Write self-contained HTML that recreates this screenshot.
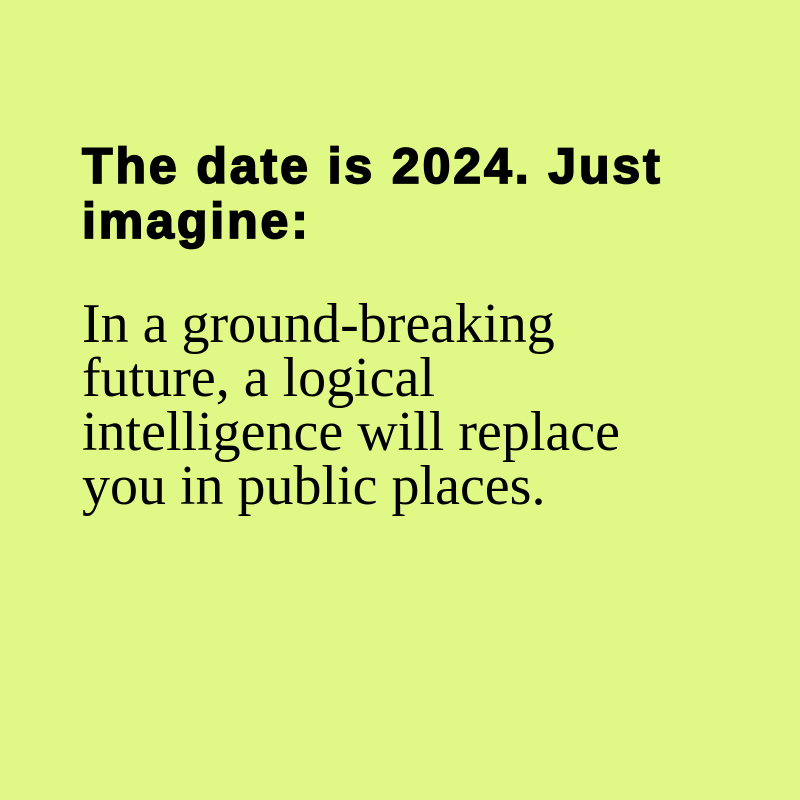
<!DOCTYPE html>
<html><head><style>
html,body{margin:0;padding:0;width:800px;height:800px;background:#e0f986;overflow:hidden}
h1{position:absolute;left:82px;top:139px;margin:0;font:bold 50px/55px "Liberation Sans",sans-serif;letter-spacing:2.9px;-webkit-text-stroke:1.8px #000;color:#000;width:700px}
p{position:absolute;left:82px;top:297px;margin:0;font:56px/54px "Liberation Serif",serif;color:#000;width:700px}
</style></head><body>
<h1>The date is 2024. Just<br>imagine:</h1>
<p>In a ground-breaking<br>future, a logical<br>intelligence will replace<br>you in public places.</p>
</body></html>
